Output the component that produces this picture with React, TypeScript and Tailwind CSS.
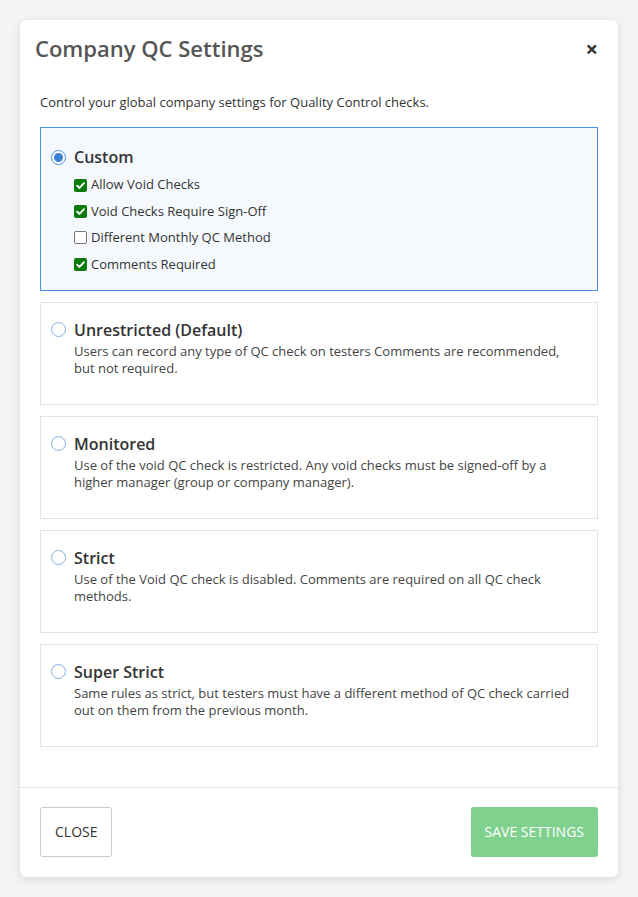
import { useState } from "react";

const options = [
  {
    id: "unrestricted",
    title: "Unrestricted (Default)",
    desc: "Users can record any type of QC check on testers Comments are recommended, but not required.",
  },
  {
    id: "monitored",
    title: "Monitored",
    desc: "Use of the void QC check is restricted. Any void checks must be signed-off by a higher manager (group or company manager).",
  },
  {
    id: "strict",
    title: "Strict",
    desc: "Use of the Void QC check is disabled. Comments are required on all QC check methods.",
  },
  {
    id: "superstrict",
    title: "Super Strict",
    desc: "Same rules as strict, but testers must have a different method of QC check carried out on them from the previous month.",
  },
];

const customFlags = [
  { label: "Allow Void Checks", on: true },
  { label: "Void Checks Require Sign-Off", on: true },
  { label: "Different Monthly QC Method", on: false },
  { label: "Comments Required", on: true },
];

const Radio = ({ on }: { on: boolean }) => (
  <span
    className={`flex h-[15px] w-[15px] flex-shrink-0 items-center justify-center rounded-full border bg-white ${
      on ? "border-[#4a8fd8]" : "border-[#80b0e0]"
    }`}
  >
    {on && <span className="h-[9px] w-[9px] rounded-full bg-[#3d82d4]" />}
  </span>
);

const Check = ({ on }: { on: boolean }) =>
  on ? (
    <span className="flex h-[13px] w-[13px] flex-shrink-0 items-center justify-center rounded-[2px] bg-[#0b7a0b]">
      <svg viewBox="0 0 12 12" className="h-[11px] w-[11px]">
        <path d="M2.3 6.2 L4.9 8.7 L9.8 3.4" fill="none" stroke="#fff" strokeWidth="2" strokeLinecap="round" strokeLinejoin="round" />
      </svg>
    </span>
  ) : (
    <span className="h-[13px] w-[13px] flex-shrink-0 rounded-[2px] border border-[#767676] bg-white" />
  );

export default function App() {
  const [selected] = useState("custom");

  return (
    <div className="min-h-[897px] bg-[#f4f4f4] p-[20px] font-['Open_Sans',sans-serif]">
      <div className="rounded-[6px] bg-white shadow-[0_2px_8px_rgba(0,0,0,0.12)]">
        {/* Header */}
        <div className="flex items-center justify-between px-[15px] pb-[10px] pt-[13px]">
          <h2 className="text-[22px] font-semibold leading-[30px] text-[#555]">Company QC Settings</h2>
          <button className="mr-[5px] text-[22px] font-bold leading-none text-[#333]">×</button>
        </div>

        {/* Body */}
        <div className="px-[20px] pb-[40px] pt-[21px]">
          <p className="mb-[16px] text-[13px] leading-[17px] text-[#333]">
            Control your global company settings for Quality Control checks.
          </p>

          <div className="flex flex-col gap-[11px]">
            <div className="border border-[#4a90e2] bg-[#f5f9fd] px-[10px] pb-[12px] pt-[18px]">
              <div className="flex items-center gap-[8px]">
                <Radio on={selected === "custom"} />
                <span className="text-[16px] font-semibold leading-[22px] text-[#333]">Custom</span>
              </div>
              <div className="mt-[4px] flex flex-col pl-[23px]">
                {customFlags.map((f) => (
                  <label key={f.label} className="flex h-[26.4px] items-center gap-[4px]">
                    <Check on={f.on} />
                    <span className="text-[13px] text-[#333]">{f.label}</span>
                  </label>
                ))}
              </div>
            </div>

            {options.map((o) => (
              <div key={o.id} className="h-[103px] border border-[#e2e2e2] bg-white pl-[10px] pr-[20px] pt-[16px]">
                <div className="flex items-center gap-[8px]">
                  <Radio on={selected === o.id} />
                  <span className="text-[16px] font-semibold leading-[22px] text-[#333]">{o.title}</span>
                </div>
                <p className="mt-[2px] pl-[23px] text-[13px] leading-[17px] text-[#444]">{o.desc}</p>
              </div>
            ))}
          </div>
        </div>

        {/* Footer */}
        <div className="flex items-center justify-between border-t border-[#e5e5e5] px-[20px] pb-[20px] pt-[19px]">
          <button className="h-[50px] rounded-[3px] border border-[#ccc] bg-white px-[14px] text-[14px] uppercase text-[#333]">
            Close
          </button>
          <button className="h-[50px] rounded-[3px] bg-[#80d18d] px-[14px] text-[14px] uppercase text-white">
            Save Settings
          </button>
        </div>
      </div>
    </div>
  );
}
